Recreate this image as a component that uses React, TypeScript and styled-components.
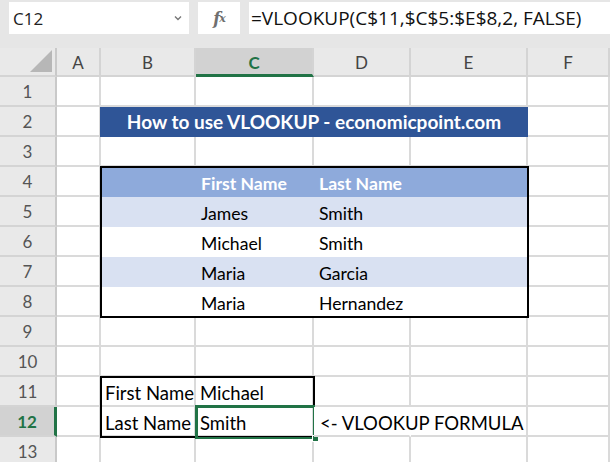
import styled, { createGlobalStyle } from 'styled-components';

const GREEN = '#217346';
const GRID = '#dadada';

const GlobalStyle = createGlobalStyle`
  *, *::before, *::after { box-sizing: border-box; }
  html, body { margin: 0; padding: 0; background: #fff; }
  body { font-family: Lato, "Liberation Sans", sans-serif; }
`;

const Window = styled.div`
  width: 610px;
  height: 462px;
  overflow: hidden;
  background: #fff;
  display: flex;
  flex-direction: column;
`;

const FormulaBar = styled.div`
  flex: none;
  height: 48px;
  background: #e6e6e6;
  display: flex;
  align-items: flex-start;
  gap: 9px;
  padding: 2px 0 0 9px;
`;

const NameBox = styled.div`
  width: 180px;
  height: 32px;
  background: #fff;
  display: flex;
  align-items: center;
  justify-content: space-between;
  padding: 0 6px 0 4px;
  font-family: "Open Sans", sans-serif;
  font-size: 17px;
  color: #222;
`;

const FxButton = styled.div`
  width: 42px;
  height: 32px;
  background: #fff;
  display: flex;
  align-items: center;
  justify-content: center;
  font-family: "DejaVu Serif", serif;
  font-style: italic;
  font-weight: bold;
  font-size: 16px;
  color: #6f6f6f;
  letter-spacing: -1px;

  sub {
    font-size: 11px;
    vertical-align: -1px;
  }
`;

const FormulaInput = styled.div`
  flex: 1;
  height: 32px;
  background: #fff;
  display: flex;
  align-items: center;
  padding-left: 2px;
  font-family: "Open Sans", sans-serif;
  font-size: 19px;
  color: #111;
  white-space: nowrap;
  overflow: hidden;
`;

const Sheet = styled.div`
  display: grid;
  grid-template-columns: 57px 44px 95px 118px 97px 117px 1fr;
  grid-template-rows: 29px repeat(13, 30px);
  font-size: 17px;
`;

const Corner = styled.div`
  grid-row: 1;
  grid-column: 1;
  background: #e9e9e9;
  border-right: 2px solid #c9c9c9;
  border-bottom: 2px solid #d4d4d4;
  display: flex;
  align-items: flex-end;
  justify-content: flex-end;
  padding: 0 3px 3px 0;
`;

const ColHead = styled.div<{ $c: number; $active?: boolean }>`
  grid-row: 1;
  grid-column: ${p => p.$c + 2};
  background: ${p => (p.$active ? '#d2d2d2' : '#e9e9e9')};
  border-right: 2px solid #d4d4d4;
  border-bottom: ${p => (p.$active ? `3px solid ${GREEN}` : '2px solid #d4d4d4')};
  display: flex;
  align-items: center;
  justify-content: center;
  color: ${p => (p.$active ? GREEN : '#444')};
  font-weight: ${p => (p.$active ? 700 : 400)};
  padding-top: 2px;
`;

const RowHead = styled.div<{ $r: number; $active?: boolean }>`
  grid-row: ${p => p.$r + 1};
  grid-column: 1;
  background: ${p => (p.$active ? '#d2d2d2' : '#e9e9e9')};
  border-right: ${p => (p.$active ? `3px solid ${GREEN}` : '2px solid #c9c9c9')};
  border-bottom: 2px solid #d4d4d4;
  display: flex;
  align-items: center;
  justify-content: center;
  color: ${p => (p.$active ? GREEN : '#555')};
  font-weight: ${p => (p.$active ? 700 : 400)};
  padding-top: 1px;
`;

const Cell = styled.div<{ $r: number; $c: number; $open?: boolean }>`
  grid-row: ${p => p.$r + 1};
  grid-column: ${p => p.$c + 2};
  min-width: 0;
  background: #fff;
  border-right: 2px solid ${p => (p.$open ? '#fff' : GRID)};
  border-bottom: 2px solid ${GRID};
  display: flex;
  align-items: flex-end;
  padding: 0 4px 1px 6px;
  white-space: nowrap;
  overflow: ${p => (p.$open ? 'visible' : 'hidden')};
  position: ${p => (p.$open ? 'relative' : 'static')};
  z-index: ${p => (p.$open ? 1 : 'auto')};
  font-size: 18.5px;
  color: #000;
`;

const Title = styled.div`
  grid-row: 3;
  grid-column: 3 / 7;
  margin-left: -1px;
  background: #2f5597;
  color: #fff;
  font-weight: 700;
  font-size: 19px;
  display: flex;
  align-items: flex-end;
  justify-content: center;
  padding-bottom: 4px;
`;

const DataTable = styled.div`
  grid-row: 5 / 10;
  grid-column: 3 / 7;
  display: grid;
  grid-template-columns: 95px 118px 97px 117px;
  grid-template-rows: repeat(5, 30px);
  background: #fff;
  outline: 2px solid #000;
  outline-offset: -1px;
  font-size: 17.6px;
`;

const TableCell = styled.div<{ $fill: string; $head?: boolean }>`
  background: ${p => p.$fill};
  color: ${p => (p.$head ? '#fff' : '#000')};
  font-weight: ${p => (p.$head ? 700 : 400)};
  display: flex;
  align-items: flex-end;
  padding: 0 5px 3px;
  white-space: nowrap;
`;

const Lookup = styled.div`
  grid-row: 12 / 14;
  grid-column: 3 / 5;
  position: relative;
  display: grid;
  grid-template-columns: 95px 118px;
  grid-template-rows: 30px 30px;
  outline: 2px solid #000;
  outline-offset: -1px;
  font-size: 18.5px;
`;

const LookupCell = styled.div`
  min-width: 0;
  border-right: 2px solid ${GRID};
  border-bottom: 2px solid ${GRID};
  display: flex;
  align-items: flex-end;
  padding: 0 4px 1px;
  white-space: nowrap;
  overflow: hidden;
`;

const Selection = styled.div`
  position: absolute;
  left: 94px;
  top: 28px;
  width: 120px;
  height: 34px;
  border-style: solid;
  border-color: ${GREEN};
  border-width: 3px 2px 2px 3px;
  pointer-events: none;
`;

const FillHandle = styled.div`
  position: absolute;
  right: -6px;
  bottom: -5px;
  width: 7px;
  height: 7px;
  background: ${GREEN};
  border: 1px solid #fff;
`;

const COLS = ['A', 'B', 'C', 'D', 'E', 'F'];
const ACTIVE_COL = 2;
const ACTIVE_ROW = 12;

const tableRows = [
  { fill: '#8eaadb', head: true, first: 'First Name', last: 'Last Name' },
  { fill: '#d9e1f2', first: 'James', last: 'Smith' },
  { fill: '#fff', first: 'Michael', last: 'Smith' },
  { fill: '#d9e1f2', first: 'Maria', last: 'Garcia' },
  { fill: '#fff', first: 'Maria', last: 'Hernandez' },
];

// cells covered by the merged title, the data table and the lookup box
const covered = (r: number, c: number) =>
  (r === 2 && c >= 1 && c <= 4) ||
  (r >= 4 && r <= 8 && c >= 1 && c <= 4) ||
  (r >= 11 && r <= 12 && c >= 1 && c <= 2);

const Triangle = () => (
  <svg width="22" height="22" viewBox="0 0 22 22">
    <polygon points="22,0 22,22 0,22" fill="#b7b7b7" />
  </svg>
);

const Chevron = () => (
  <svg width="10" height="8" viewBox="0 0 10 8">
    <path d="M2 2.5 L5 5.5 L8 2.5" stroke="#777" strokeWidth="1.4" fill="none" />
  </svg>
);

const App = () => {
  const rows = Array.from({ length: 13 }, (_, i) => i + 1);

  return (
    <Window>
      <GlobalStyle />
      <FormulaBar>
        <NameBox>
          C12
          <Chevron />
        </NameBox>
        <FxButton>
          f<sub>x</sub>
        </FxButton>
        <FormulaInput>=VLOOKUP(C$11,$C$5:$E$8,2, FALSE)</FormulaInput>
      </FormulaBar>

      <Sheet>
        <Corner>
          <Triangle />
        </Corner>
        {COLS.map((name, c) => (
          <ColHead key={name} $c={c} $active={c === ACTIVE_COL}>
            {name}
          </ColHead>
        ))}

        {rows.map(r => (
          <RowHead key={`h${r}`} $r={r} $active={r === ACTIVE_ROW}>
            {r}
          </RowHead>
        ))}

        {rows.flatMap(r =>
          COLS.map((_, c) =>
            covered(r, c) ? null : (
              <Cell key={`${r}-${c}`} $r={r} $c={c} $open={r === 12 && c === 3}>
                {r === 12 && c === 3 ? '<- VLOOKUP FORMULA' : ''}
              </Cell>
            )
          )
        )}

        <Title>How to use VLOOKUP - economicpoint.com</Title>

        <DataTable>
          {tableRows.map((row, i) => [
            <TableCell key={`${i}b`} $fill={row.fill} />,
            <TableCell key={`${i}c`} $fill={row.fill} $head={row.head}>
              {row.first}
            </TableCell>,
            <TableCell key={`${i}d`} $fill={row.fill} $head={row.head}>
              {row.last}
            </TableCell>,
            <TableCell key={`${i}e`} $fill={row.fill} />,
          ])}
        </DataTable>

        <Lookup>
          <LookupCell>First Name</LookupCell>
          <LookupCell>Michael</LookupCell>
          <LookupCell>Last Name</LookupCell>
          <LookupCell>Smith</LookupCell>
          <Selection>
            <FillHandle />
          </Selection>
        </Lookup>
      </Sheet>
    </Window>
  );
};

export default App;
